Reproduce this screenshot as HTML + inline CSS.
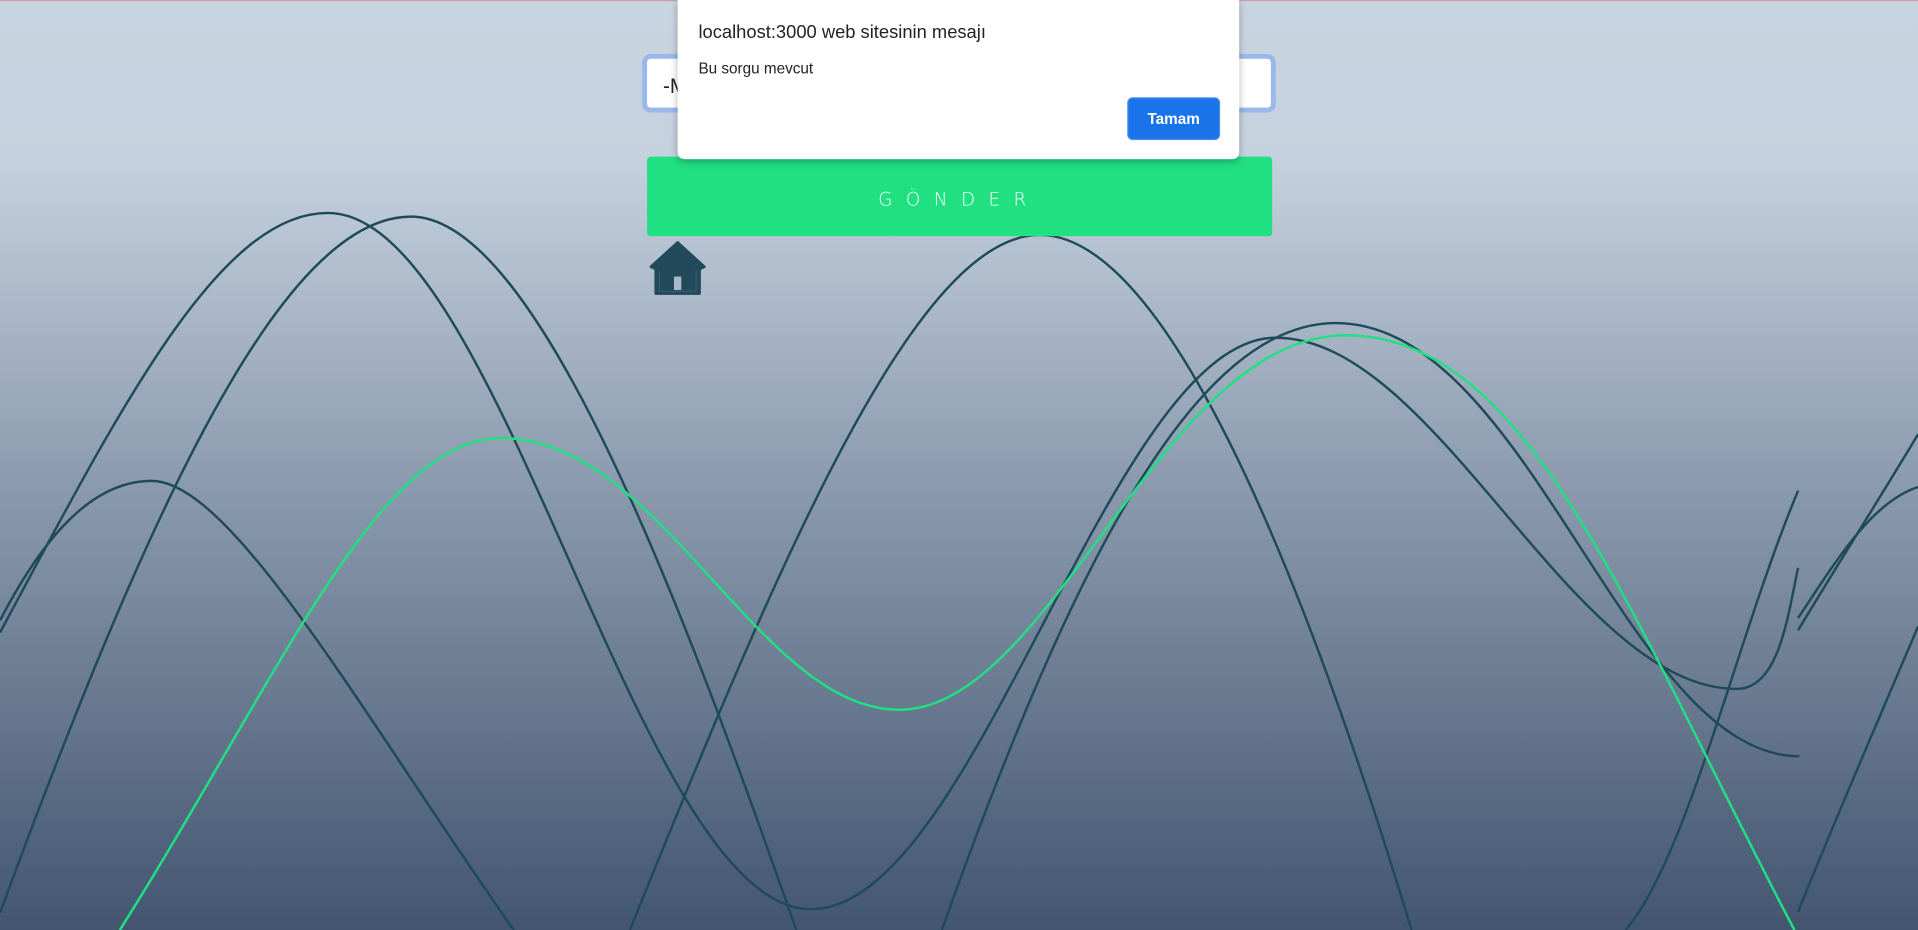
<!DOCTYPE html>
<html><head><meta charset="utf-8"><style>
html,body{margin:0;padding:0;width:1918px;height:930px;overflow:hidden;background:#8d9cb0}
svg{display:block}
</style></head><body>
<svg width="1918" height="930" viewBox="0 0 1568 760" preserveAspectRatio="none" xmlns="http://www.w3.org/2000/svg">
<defs>
<linearGradient id="bg" x1="0" y1="0" x2="0" y2="1">
<stop offset="0" stop-color="#c9d4e1"/>
<stop offset="0.17" stop-color="#c5d1de"/>
<stop offset="0.5" stop-color="#8e9db1"/>
<stop offset="1" stop-color="#435670"/>
</linearGradient>
<filter id="sh" x="-10%" y="-20%" width="120%" height="150%"><feDropShadow dx="0" dy="2" stdDeviation="3" flood-color="#000" flood-opacity="0.3"/></filter>
</defs>
<rect width="1568" height="760" fill="url(#bg)"/>
<rect width="1568" height="1" fill="#c9a0a8"/>
<g fill="none" stroke="#1f4a5a" stroke-width="2">
<path d="M0,517 C100,330 180,174 268,174 C410,174 521,743 663,743 C798,743 908,276 1043,276 C1175,276 1285,563 1420,563 C1455,563 1462,500 1470,464"/>
<path d="M0,746 C120,420 230,177 336,177 C440,177 560,500 651,760"/>
<path d="M515,760 C640,450 750,192 850,192 C950,192 1060,450 1154,760"/>
<path d="M0,507 C40,430 80,393 124,393 C190,393 300,590 420,760"/>
<path d="M770,760 C880,450 980,264 1092,264 C1250,264 1330,618 1471,618"/>
<path d="M1470,401 C1420,520 1380,700 1329,760"/>
<path d="M1470,515 C1500,465 1535,410 1568,355"/>
<path d="M1470,505 C1500,460 1530,410 1568,398"/>
<path d="M1470,745 C1500,670 1535,590 1568,512"/>
</g>
<path d="M98,760 C230,550 310,358 410,358 C540,358 620,580 735,580 C860,580 950,274 1100,274 C1250,274 1330,500 1467,760" fill="none" stroke="#20e082" stroke-width="2"/>

<rect x="527" y="46" width="514" height="44" rx="5" fill="#fff" stroke="#9ab8ec" stroke-width="4"/>
<text x="542" y="76" font-family="Liberation Sans, sans-serif" font-size="17" fill="#222">-M</text>

<rect x="529" y="128" width="511" height="65" rx="3" fill="#20e082"/>
<text x="784" y="168" text-anchor="middle" font-family="DejaVu Sans, sans-serif" font-weight="200" font-size="15" letter-spacing="11" fill="#fff">GÖNDER</text>

<path d="M554,198 L576,218 L572,220 L572,240 L536,240 L536,220 L532,218 Z" fill="#234a5a" stroke="#234a5a" stroke-width="2" stroke-linejoin="round"/>
<path d="M539,221 L539,238 L569,238 L569,221" fill="none" stroke="#3e6878" stroke-width="0.6"/>
<rect x="551" y="226" width="6" height="11" fill="#a9b7c8"/>

<path d="M554,0 H1013 V124 Q1013,130 1007,130 H560 Q554,130 554,124 Z" fill="#fff" filter="url(#sh)"/>
<text x="571" y="31" font-family="Liberation Sans, sans-serif" font-size="15" fill="#222">localhost:3000 web sitesinin mesajı</text>
<text x="571" y="60" font-family="Liberation Sans, sans-serif" font-size="12.5" fill="#222">Bu sorgu mevcut</text>
<rect x="922" y="80" width="75" height="34" rx="4" fill="#1a73e8" stroke="#4d8ff0" stroke-width="1"/>
<text x="959.5" y="101.5" text-anchor="middle" font-family="Liberation Sans, sans-serif" font-weight="bold" font-size="12.5" fill="#fff">Tamam</text>
</svg>
</body></html>
